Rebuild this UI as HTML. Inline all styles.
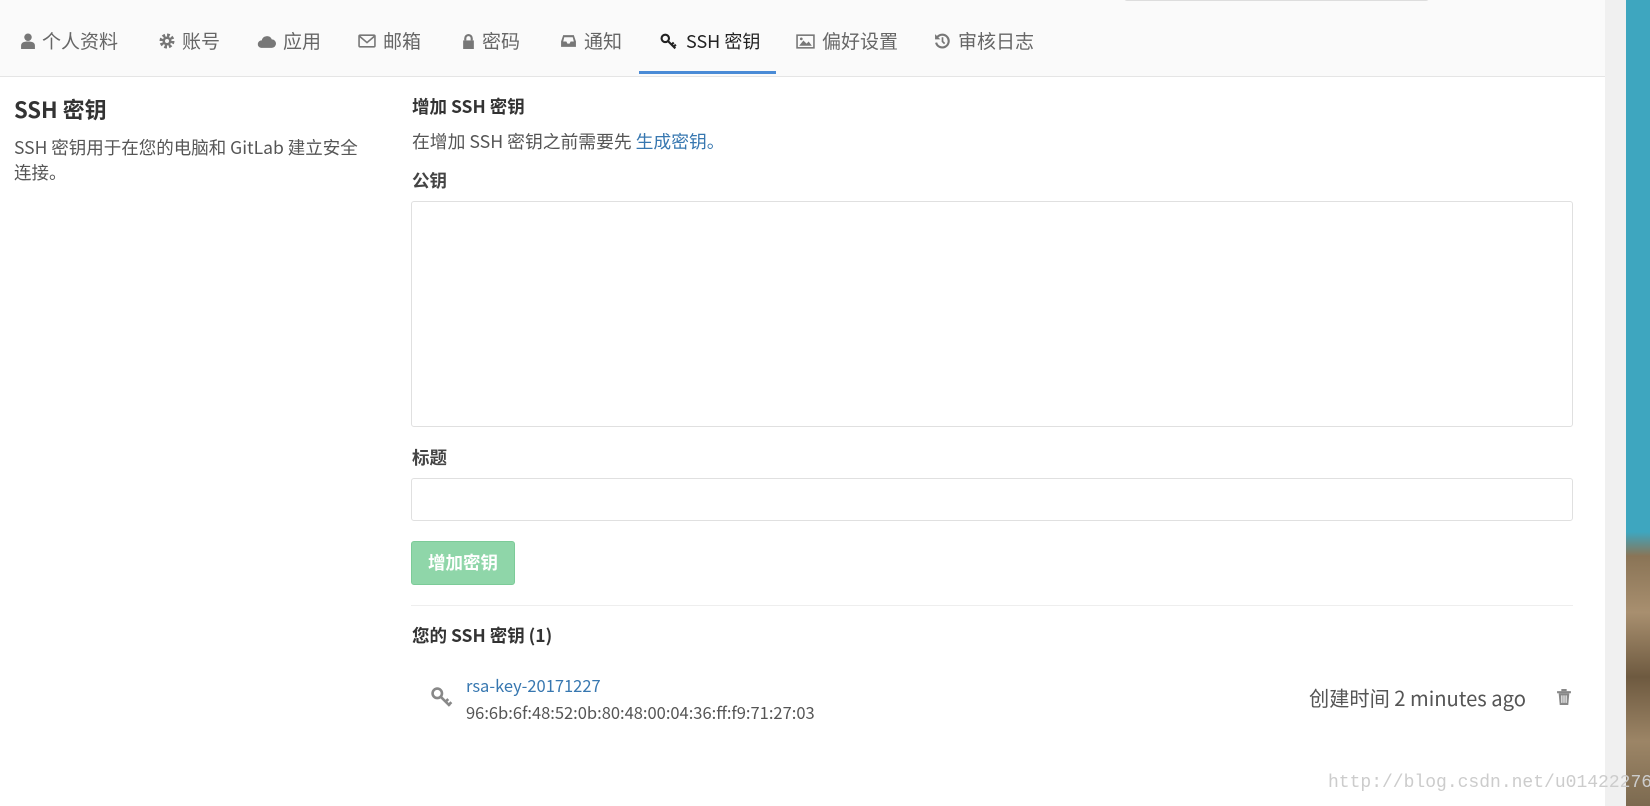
<!DOCTYPE html>
<html><head><meta charset="utf-8"><style>
*{box-sizing:border-box;margin:0;padding:0}
body{width:1650px;height:806px;overflow:hidden;background:#fff;font-family:"Noto Sans CJK SC","Liberation Sans",sans-serif;color:#555;position:relative}
.nav{position:absolute;left:0;top:0;width:1605px;height:77px;background:#fafafa;border-bottom:1px solid #e5e5e5}
.nav .it{position:absolute;top:28px;font-size:19px;color:#666;white-space:nowrap;display:flex;align-items:center;gap:7px;line-height:26px}
.nav .act{color:#222;font-size:18px}
.ul{position:absolute;left:639px;top:71px;width:137px;height:3px;background:#4a8bd6}
.topbox{position:absolute;left:1124px;top:-5px;width:305px;height:6px;border:1px solid #ddd;border-radius:3px;background:#fff}
.abs{position:absolute;white-space:nowrap}
.side{position:absolute;left:1605px;top:0;width:21px;height:806px;background:#f0f0f0}
.img{position:absolute;left:1626px;top:0;width:24px;height:806px;background:linear-gradient(180deg,#3ea6bf 0,#3ea6bf 66%,#8a7456 69%,#a88f6f 76%,#6e5a40 84%,#9c8566 92%,#7c6a50 100%)}
.box{position:absolute;border:1px solid #e0e0e0;border-radius:3px;background:#fff}
</style></head><body>
<div class="nav">
<div class="it" style="left:21px"><svg width="14" height="16" viewBox="0 0 13 15"><circle cx="6.5" cy="4" r="3.5" fill="#777"/><path d="M0 15v-3c0-3 2.5-4 6.5-4s6.5 1 6.5 4v3z" fill="#777"/></svg>个人资料</div>
<div class="it" style="left:159px"><svg width="16" height="16" viewBox="0 0 16 16"><circle cx="8" cy="8" r="5.5" fill="none" stroke="#777" stroke-width="4" stroke-dasharray="2.5 1.8"/><circle cx="8" cy="8" r="4.5" fill="#777"/><circle cx="8" cy="8" r="2" fill="#fafafa"/></svg>账号</div>
<div class="it" style="left:257px"><svg width="19" height="15" viewBox="0 0 18 14"><path d="M4 13h10a4 4 0 0 0 0-8 5 5 0 0 0-9.5 1A3.5 3.5 0 0 0 4 13z" fill="#777"/></svg>应用</div>
<div class="it" style="left:358px"><svg width="18" height="14" viewBox="0 0 17 13"><rect x="1" y="1" width="15" height="11" rx="1" fill="none" stroke="#777" stroke-width="1.5"/><path d="M1.5 2l7 6 7-6" fill="none" stroke="#777" stroke-width="1.5"/></svg>邮箱</div>
<div class="it" style="left:462px"><svg width="13" height="15" viewBox="0 0 12 14"><path d="M3 6V4a3 3 0 0 1 6 0v2" fill="none" stroke="#777" stroke-width="2"/><rect x="1" y="6" width="10" height="8" fill="#777"/></svg>密码</div>
<div class="it" style="left:560px"><svg width="17" height="14" viewBox="0 0 16 13"><path d="M3 1h10l2 6v5H1V7z" fill="#777"/><path d="M3 7h3l1 2h2l1-2h3L12 3H4z" fill="#fafafa"/></svg>通知</div>
<div class="it act" style="left:660px"><svg width="19" height="17" viewBox="0 0 18 16"><circle cx="5" cy="5" r="3.5" fill="none" stroke="#222" stroke-width="2"/><path d="M7.5 7.5l7 7M11 11l2-2M13 13l2-2" stroke="#222" stroke-width="2"/></svg>SSH 密钥</div>
<div class="it" style="left:796px"><svg width="19" height="15" viewBox="0 0 18 14"><rect x="1" y="1" width="16" height="12" fill="none" stroke="#777" stroke-width="1.5"/><path d="M3 11l4-5 3 3 2-2 3 4z" fill="#777"/><circle cx="5" cy="4.5" r="1.3" fill="#777"/></svg>偏好设置</div>
<div class="it" style="left:934px"><svg width="17" height="16" viewBox="0 0 16 15"><path d="M3 4a6 6 0 1 1-1 5" fill="none" stroke="#777" stroke-width="2"/><path d="M1 1v5h5z" fill="#777"/><path d="M8 4v4l2 2" fill="none" stroke="#777" stroke-width="1.6"/></svg>审核日志</div>
<div class="ul"></div>
<div class="topbox"></div>
</div>
<div class="abs" style="left:14px;top:93px;font-size:22px;font-weight:bold;color:#333">SSH 密钥</div>
<div class="abs" style="left:14px;top:135px;font-size:17.5px;line-height:25px;color:#555">SSH 密钥用于在您的电脑和 GitLab 建立安全<br>连接。</div>
<div class="abs" style="left:412px;top:94px;font-size:17.5px;font-weight:bold;color:#333">增加 SSH 密钥</div>
<div class="abs" style="left:412px;top:128px;font-size:17.8px;color:#555">在增加 SSH 密钥之前需要先 <span style="color:#3777b0">生成密钥。</span></div>
<div class="abs" style="left:412px;top:168px;font-size:17.5px;font-weight:bold;color:#444">公钥</div>
<div class="box" style="left:411px;top:201px;width:1162px;height:226px"></div>
<div class="abs" style="left:412px;top:445px;font-size:17.5px;font-weight:bold;color:#444">标题</div>
<div class="box" style="left:411px;top:478px;width:1162px;height:43px"></div>
<div class="abs" style="left:411px;top:541px;width:104px;height:44px;background:#8fd6a9;border:1px solid #7ccb98;border-radius:3px;color:#fff;font-size:17.5px;font-weight:bold;text-align:center;line-height:42px">增加密钥</div>
<div class="abs" style="left:411px;top:605px;width:1162px;height:1px;background:#eee"></div>
<div class="abs" style="left:412px;top:623px;font-size:17.5px;font-weight:bold;color:#333">您的 SSH 密钥 (1)</div>
<svg class="abs" style="left:431px;top:687px" width="23" height="21" viewBox="0 0 22 20"><circle cx="6" cy="6" r="4.5" fill="none" stroke="#888" stroke-width="2.5"/><path d="M9 9l9 9M14 14l2.5-2.5M17 17l2.5-2.5" stroke="#888" stroke-width="2.5"/></svg>
<div class="abs" style="left:466px;top:673px;font-size:16.5px;color:#3777b0">rsa-key-20171227</div>
<div class="abs" style="left:466px;top:700px;font-size:16.5px;color:#555">96:6b:6f:48:52:0b:80:48:00:04:36:ff:f9:71:27:03</div>
<div class="abs" style="left:1309px;top:683px;font-size:20.2px;color:#555">创建时间 2 minutes ago</div>
<svg class="abs" style="left:1557px;top:689px" width="14" height="16" viewBox="0 0 13 15"><rect x="0" y="2" width="13" height="2" fill="#888"/><rect x="4" y="0" width="5" height="2" fill="#888"/><path d="M1.5 4h10l-1 11h-8z" fill="#888"/><path d="M4.5 6v7M6.5 6v7M8.5 6v7" stroke="#fff" stroke-width="1"/></svg>
<div class="side"></div>
<div class="img"></div>
<div class="abs" style="left:1328px;top:773px;font-size:18px;color:#ccc;font-family:'Liberation Mono',monospace">http://blog.csdn.net/u01422276</div>
</body></html>
